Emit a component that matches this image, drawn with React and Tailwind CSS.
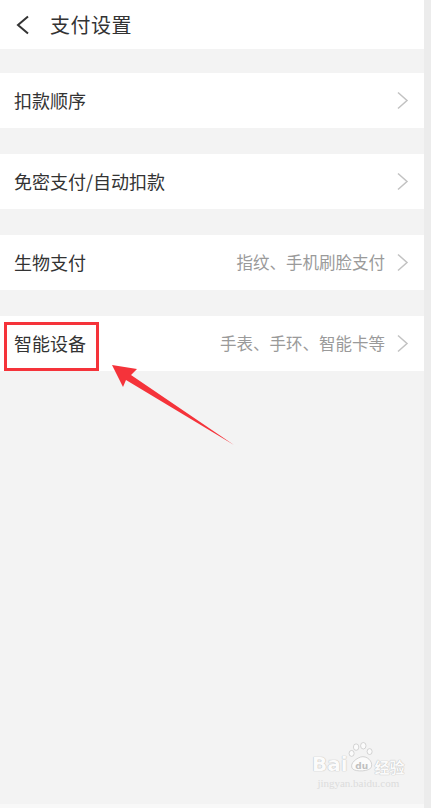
const rows = [
  { label: '扣款顺序', hint: '' },
  { label: '免密支付/自动扣款', hint: '' },
  { label: '生物支付', hint: '指纹、手机刷脸支付' },
  { label: '智能设备', hint: '手表、手环、智能卡等' },
]

function Chevron() {
  return (
    <svg width="13" height="19" viewBox="0 0 13 19" className="shrink-0">
      <polyline points="2,1.5 11,9.5 2,17.5" fill="none" stroke="#c2c2c2" strokeWidth="1.5" />
    </svg>
  )
}

function Row({ label, hint, boxed }) {
  return (
    <div className="relative h-[55px] bg-white flex items-center pl-[14px] pr-[15px]">
      <span className="text-[18px] text-[#333]">{label}</span>
      <div className="flex-1" />
      {hint && <span className="text-[16.5px] text-[#9a9a9a] mr-[11px]">{hint}</span>}
      <Chevron />
      {boxed && (
        <div className="absolute left-[4px] top-[6px] w-[95px] h-[49px] border-[3px] border-[#f5333a]" />
      )}
    </div>
  )
}

export default function App() {
  return (
    <div
      className="relative w-[431px] h-[808px] flex overflow-hidden"
      style={{ fontFamily: '"Noto Sans CJK SC", "Noto Sans", sans-serif' }}
    >
      <div className="w-[424px] flex flex-col bg-[#f3f3f3]">
        {/* Header */}
        <div className="h-[49px] bg-white flex items-center pl-[15px]">
          <svg width="15" height="20" viewBox="0 0 15 20" className="shrink-0">
            <polyline points="13,1.5 3,10 13,18.5" fill="none" stroke="#333" strokeWidth="2" />
          </svg>
          <span className="ml-[20px] text-[20px] text-[#333] tracking-[0.5px]">支付设置</span>
        </div>

        <div className="flex flex-col gap-[26px] pt-[24px]">
          {rows.map((r, i) => (
            <Row key={r.label} label={r.label} hint={r.hint} boxed={i === 3} />
          ))}
        </div>

        <div className="flex-1" />
        <div className="h-[4px] bg-[#f8f8f8]" />
      </div>
      <div className="w-[7px] bg-[#ececec]" />

      {/* Arrow annotation */}
      <svg className="absolute left-0 top-0 pointer-events-none" width="431" height="808">
        <polygon
          points="112,365 137,369 131,375 234,445 126,380 123,387"
          fill="#f5333a"
        />
      </svg>

      {/* Watermark */}
      <div className="absolute left-[312px] top-[740px] flex flex-col items-center pointer-events-none">
        <div className="flex items-end">
          <span className="text-[20px] font-bold leading-none text-[#fbfbfb] [text-shadow:0_0_1px_#bdbdbd,0_0_1px_#bdbdbd]" style={{ fontFamily: '"DejaVu Sans", sans-serif' }}>
            Bai
          </span>
          <svg width="27" height="34" viewBox="0 0 30 34">
            <g fill="#fbfbfb" stroke="#c4c4c4" strokeWidth="0.8">
              <ellipse cx="9" cy="6" rx="3" ry="3.6" />
              <ellipse cx="17" cy="4.5" rx="3" ry="3.6" />
              <ellipse cx="4" cy="13" rx="2.8" ry="3.3" />
              <ellipse cx="24" cy="11" rx="2.8" ry="3.3" />
              <path d="M5 30 C2 26 6 20 14 17 C21 15 28 22 26 28 C25 33 8 34 5 30 Z" />
            </g>
            <text x="8" y="30" fontSize="10" fill="#c0c0c0" fontFamily="DejaVu Sans" fontWeight="bold">du</text>
          </svg>
          <span className="text-[15px] leading-none font-bold text-[#fbfbfb] [text-shadow:0_0_1px_#bdbdbd,0_0_1px_#bdbdbd]">经验</span>
        </div>
        <span className="mt-[4px] text-[11px] leading-none text-[#dcdcdc]" style={{ fontFamily: '"Liberation Serif", serif' }}>
          jingyan.baidu.com
        </span>
      </div>
    </div>
  )
}
